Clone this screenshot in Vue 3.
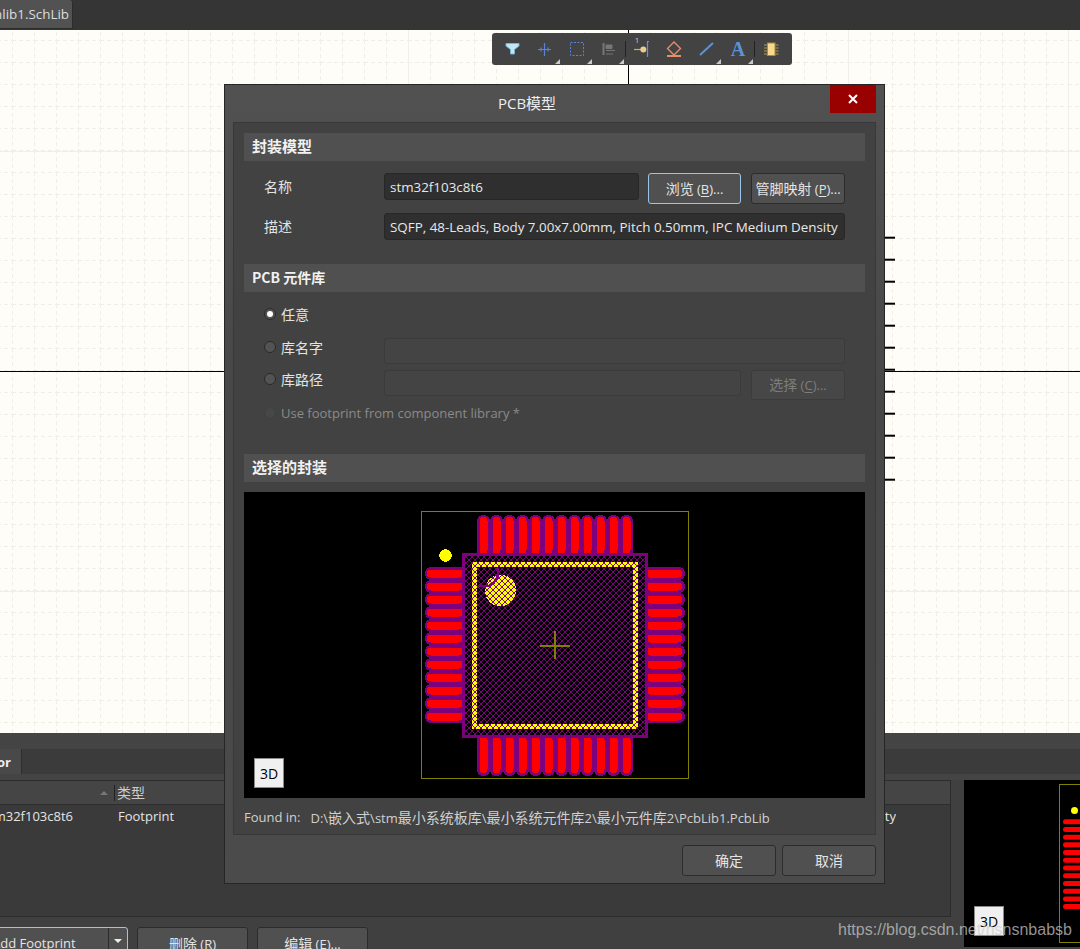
<script setup>
const idx = Array.from({ length: 12 }, (_, i) => i)
const topX = idx.map(i => 483.5 + 13 * i)
const sideY = idx.map(i => 573.5 + 13 * i)
const pinY = idx.map(i => 237.7 + 22 * i)
const miniY = idx.map(i => 821.7 + 7.72 * i)
const triangles = [560, 592, 624, 721, 753]
const compRows = [45, 48, 51, 54]
let h = ''
for (let i = 0; i < 6; i++) {
  h += `M${i} ${i}h1v1h-1zM${5 - i} ${i}h1v1h-1z`
}
const hatchTile = h
</script>

<template>
  <div class="app">
    <header class="topbar">
      <div class="doc-tab"><span>Schlib1.SchLib</span></div>
    </header>

    <section class="canvas">
      <svg class="sheet" viewBox="0 30 1080 703" width="1080" height="703">
        <defs>
          <pattern id="minor" x="12" y="18" width="22" height="22" patternUnits="userSpaceOnUse">
            <path d="M0.5 0V22M0 0.5H22" fill="none" stroke="#f0eee8" stroke-width="1" stroke-dasharray="4 3" />
          </pattern>
        </defs>
        <rect x="0" y="30" width="1080" height="703" fill="#fffdf8" />
        <rect x="0" y="30" width="1080" height="703" fill="url(#minor)" />
        <path d="M188.5 30V733M408.5 30V733M848.5 30V733M1068.5 30V733M0 151.5H1080M0 591.5H1080" stroke="#f1efe9" fill="none" />
        <path d="M628.5 30V733M0 371.5H1080" stroke="#000" stroke-width="1" fill="none" />
        <path v-for="y in pinY" :key="y" :d="`M885 ${y}H895`" stroke="#000" stroke-width="2" />
      </svg>

      <div class="toolbar">
        <svg viewBox="492 33 300 32" width="300" height="32">
          <path d="M506 43.5H519V46L514.5 49.5V54H510.5V49.5L506 46Z" fill="#c4e6f4" stroke="#74b4cf" stroke-width="1" />
          <path d="M538 49.5H551M544.5 43V56M541 47.5V51.5M548 47.5V51.5" stroke="#5b82d6" stroke-width="1.2" fill="none" />
          <rect x="570.5" y="42.5" width="13" height="13" fill="none" stroke="#5b82d6" stroke-dasharray="2 1.5" />
          <path d="M603.5 43V55" stroke="#777" stroke-width="2" />
          <path d="M606 45H612V48.5H606ZM606 50.5H615" fill="#777" stroke="#777" />
          <path d="M606 54H613" stroke="#777" />
          <path d="M625.5 41V57M754.5 41V57" stroke="#222" />
          <text x="637" y="43" class="pin-num">1</text>
          <path d="M634 49.5H641" stroke="#c7a96a" stroke-width="1.2" />
          <circle cx="643.3" cy="49.5" r="3" fill="#eccd8e" />
          <path d="M649 41.5H647.5V57" stroke="#5f92db" stroke-width="1.2" fill="none" />
          <path d="M674 42L680.5 48.5L674 55L667.5 48.5Z" fill="none" stroke="#e48e6a" stroke-width="1.4" />
          <rect x="667" y="55" width="14" height="2" fill="#e48e6a" />
          <path d="M700 55L713 43" stroke="#5a93d8" stroke-width="2" />
          <text x="738" y="56" class="tool-a">A</text>
          <rect x="767.5" y="43" width="7.5" height="12.5" fill="#f7d990" stroke="#a88c3a" />
          <path v-for="y in compRows" :key="y" :d="`M764 ${y}H767M775.5 ${y}H778.5`" stroke="#b39a4d" />
          <path v-for="x in triangles" :key="x" :d="`M${x - 5} 64H${x}V59Z`" fill="#c9c9c9" />
        </svg>
      </div>
    </section>

    <section class="bottom">
      <div class="band"></div>
      <div class="tabs"><div class="tab"><span>Editor</span></div></div>
      <div class="tab-rule"></div>
      <div class="bottom-main">
        <div class="left-col">
          <div class="table">
            <div class="thead">
              <div class="th-name"><i class="sort"></i></div>
              <div class="th-type">类型</div>
            </div>
            <div class="trow">
              <div class="td-name"><span>stm32f103c8t6</span></div>
              <div class="td-type">Footprint</div>
              <div class="td-desc"><span>SQFP, 48-Leads, Body 7.00x7.00mm, Pitch 0.50mm, IPC Medium Density</span></div>
            </div>
          </div>
          <div class="actions">
            <button class="btn add-btn">
              <span class="add-text">Add Footprint</span>
              <span class="add-caret"><i></i></span>
            </button>
            <button class="btn act-btn"><span><span class="zh">删除</span> (R)</span></button>
            <button class="btn act-btn"><span><span class="zh">编辑</span> (E)...</span></button>
          </div>
        </div>
        <div class="mini-preview">
          <svg viewBox="964 780 116 167" width="116" height="167">
            <rect x="1059.5" y="784.5" width="40" height="158" fill="none" stroke="#808000" />
            <circle cx="1074.5" cy="810.5" r="3.5" fill="#ff0" />
            <rect v-for="y in miniY" :key="y" x="1063" :y="y - 2.5" width="30" height="5" rx="2.5" fill="#f00" />
          </svg>
          <div class="btn-3d mini-3d">3D</div>
        </div>
      </div>
    </section>

    <div class="dialog">
      <div class="title">
        <span>PCB<span class="zh">模型</span></span>
        <button class="close">
          <svg viewBox="0 0 10 10" width="10" height="10"><path d="M1 1L9 9M9 1L1 9" stroke="#fff" stroke-width="2" /></svg>
        </button>
      </div>
      <div class="panel">
        <h3 class="sec">封装模型</h3>
        <div class="row row-first">
          <label class="lbl">名称</label>
          <div class="input w-name">stm32f103c8t6</div>
          <button class="btn browse focus"><span><span class="zh">浏览</span> (<u>B</u>)...</span></button>
          <button class="btn map"><span><span class="zh">管脚映射</span> (<u>P</u>)...</span></button>
        </div>
        <div class="row row-second">
          <label class="lbl">描述</label>
          <div class="input grow">SQFP, 48-Leads, Body 7.00x7.00mm, Pitch 0.50mm, IPC Medium Density</div>
        </div>

        <h3 class="sec sec-lib">PCB 元件库</h3>
        <div class="radio-row r-any">
          <span class="radio on"></span><span class="zh">任意</span>
        </div>
        <div class="row row-lib">
          <div class="radio-cell"><span class="radio"></span><span class="zh">库名字</span></div>
          <div class="input off grow"></div>
        </div>
        <div class="row row-path">
          <div class="radio-cell"><span class="radio"></span><span class="zh">库路径</span></div>
          <div class="input off grow"></div>
          <button class="btn select-btn"><span><span class="zh">选择</span> (<u>C</u>)...</span></button>
        </div>
        <div class="radio-row r-use">
          <span class="radio faint"></span><span>Use footprint from component library *</span>
        </div>

        <h3 class="sec sec-sel">选择的封装</h3>
        <div class="preview">
          <svg viewBox="244 492 621 306" width="621" height="306" shape-rendering="crispEdges">
            <defs>
              <pattern id="hatch" x="466" y="557" width="6" height="6" patternUnits="userSpaceOnUse">
                <path :d="hatchTile" fill="#7d007d" />
              </pattern>
            </defs>
            <rect x="421.5" y="511.5" width="267" height="267" fill="none" stroke="#808000" />

            <rect v-for="x in topX" :key="'pt' + x" :x="x - 6.5" y="515" width="13" height="42" rx="6" fill="#7d007d" />
            <rect v-for="x in topX" :key="'pb' + x" :x="x - 6.5" y="734" width="13" height="42" rx="6" fill="#7d007d" />
            <rect v-for="y in sideY" :key="'pl' + y" x="425" :y="y - 6.5" width="42" height="13" rx="6" fill="#7d007d" />
            <rect v-for="y in sideY" :key="'pr' + y" x="643" :y="y - 6.5" width="42" height="13" rx="6" fill="#7d007d" />

            <rect v-for="x in topX" :key="'rt' + x" :x="x - 4" y="517" width="8" height="37" rx="4" fill="#f00" />
            <rect v-for="x in topX" :key="'rb' + x" :x="x - 4" y="736" width="8" height="37" rx="4" fill="#f00" />
            <rect v-for="y in sideY" :key="'rl' + y" x="427" :y="y - 4" width="36" height="8" rx="4" fill="#f00" />
            <rect v-for="y in sideY" :key="'rr' + y" x="646" :y="y - 4" width="36" height="8" rx="4" fill="#f00" />

            <circle cx="445.5" cy="555.5" r="6.3" fill="#ff0" />
            <rect x="463.5" y="554.5" width="183" height="182" fill="#000" stroke="#7d007d" stroke-width="3" />
            <rect x="474.5" y="564.5" width="161" height="162" fill="none" stroke="#ff0" stroke-width="5" />
            <circle cx="500.5" cy="590.5" r="15.7" fill="#ff0" />
            <rect x="465" y="556" width="180" height="179" fill="url(#hatch)" />
            <path d="M497.3 568.3A13.7 13.7 0 0 1 478.3 585" fill="none" stroke="#7d007d" stroke-width="2.5" />
            <path d="M540 645.5H570M554.5 631V659" stroke="#808000" stroke-width="2" />
          </svg>
          <div class="btn-3d main-3d">3D</div>
        </div>
        <div class="found">
          <span class="found-lbl">Found in:</span>
          <span>D:\<span class="zh">嵌入式</span>\stm<span class="zh">最小系统板库</span>\<span class="zh">最小系统元件库</span>2\<span class="zh">最小元件库</span>2\PcbLib1.PcbLib</span>
        </div>
      </div>
      <div class="foot">
        <button class="btn foot-btn"><span class="zh">确定</span></button>
        <button class="btn foot-btn"><span class="zh">取消</span></button>
      </div>
    </div>

    <div class="watermark">https://blog.csdn.net/nsnsnbabsb</div>
  </div>
</template>

<style>
html, body { margin: 0; background: #3f3f3f; }
</style>

<style scoped>
.app {
  position: relative;
  width: 1080px;
  height: 949px;
  overflow: hidden;
  display: flex;
  flex-direction: column;
  font-family: "Open Sans", "Noto Sans CJK SC", sans-serif;
  font-size: 13px;
  color: #e4e4e4;
  background: #3f3f3f;
}
.zh { font-family: "Noto Sans CJK SC", sans-serif; font-size: 14px; }
.topbar { height: 30px; flex: none; background: #353535; }
.doc-tab {
  width: 73px;
  height: 29px;
  box-sizing: border-box;
  background: #525252;
  border-right: 1px solid #2c2c2c;
  border-bottom: 1px solid #2c2c2c;
  border-radius: 0 3px 0 0;
  display: flex;
  justify-content: flex-end;
  align-items: center;
  padding-right: 3px;
  overflow: hidden;
  white-space: nowrap;
  color: #ddd;
  font-size: 13.4px;
}
.canvas { position: relative; height: 703px; flex: none; }
.sheet { display: block; }
.toolbar {
  position: absolute;
  left: 492px;
  top: 3px;
  width: 300px;
  height: 32px;
  background: #434343;
  border-radius: 3px;
}
.toolbar svg { display: block; }
.pin-num { font: 8px "Open Sans", sans-serif; fill: #c9c9c9; text-anchor: middle; }
.tool-a { font: bold 20px "Liberation Serif", serif; fill: #5a93d8; text-anchor: middle; }

.bottom { flex: 1; display: flex; flex-direction: column; min-height: 0; background: #404040; }
.band { height: 16px; background: #444; flex: none; }
.tabs { height: 25px; flex: none; background: #3b3b3b; }
.tab {
  width: 22px;
  height: 25px;
  box-sizing: border-box;
  background: #494949;
  border-right: 1px solid #2e2e2e;
  display: flex;
  justify-content: flex-end;
  align-items: center;
  padding-right: 10px;
  overflow: hidden;
  font-weight: 700;
  color: #eee;
}
.tab-rule { height: 6px; flex: none; background: #444; }
.bottom-main { display: flex; gap: 13px; flex: 1; min-height: 0; }
.left-col { width: 951px; flex: none; }
.table {
  height: 137px;
  box-sizing: border-box;
  background: #3a3a3a;
  border: 1px solid #2c2c2c;
  border-left: 0;
}
.thead {
  height: 23px;
  display: flex;
  align-items: center;
  background: #454545;
  border-bottom: 1px solid #2e2e2e;
}
.th-name {
  width: 115px;
  height: 16px;
  flex: none;
  box-sizing: border-box;
  border-right: 1px solid #222;
  position: relative;
}
.sort {
  position: absolute;
  right: 6px;
  top: 6px;
  width: 0;
  height: 0;
  border: 4px solid transparent;
  border-top: 0;
  border-bottom: 4px solid #777;
}
.th-type {
  padding-left: 2px;
  padding-bottom: 2px;
  font-family: "Noto Sans CJK SC", sans-serif;
  font-size: 14px;
  color: #ccc;
}
.trow { display: flex; align-items: center; height: 22px; position: relative; }
.td-name {
  width: 73px;
  flex: none;
  display: flex;
  justify-content: flex-end;
  white-space: nowrap;
  overflow: hidden;
  margin-right: 45px;
}
.td-type { width: 200px; flex: none; }
.td-desc {
  width: 578px;
  flex: none;
  display: flex;
  justify-content: flex-end;
  white-space: nowrap;
  overflow: hidden;
}
.actions { display: flex; gap: 9px; margin-top: 10px; align-items: flex-start; }
.btn {
  box-sizing: border-box;
  margin: 0;
  padding: 0 0 2px;
  background: #505050;
  border: 1px solid #2c2c2c;
  border-radius: 3px;
  color: #e4e4e4;
  font: inherit;
  display: flex;
  align-items: center;
  justify-content: center;
  white-space: pre;
}
.btn u { text-underline-offset: 2px; }
.add-btn {
  width: 148px;
  height: 32px;
  margin-left: -20px;
  border-color: #9cc4ea;
  justify-content: flex-start;
  flex: none;
  padding: 0;
}
.add-text { width: 127px; padding-left: 11px; box-sizing: border-box; flex: none; white-space: nowrap; text-align: left; }
.add-caret {
  width: 20px;
  align-self: stretch;
  border-left: 1px solid #2c2c2c;
  display: flex;
  justify-content: center;
  padding-top: 11px;
  box-sizing: border-box;
}
.add-caret i {
  width: 0;
  height: 0;
  border: 4px solid transparent;
  border-bottom: 0;
  border-top: 4px solid #eee;
}
.act-btn { width: 111px; height: 32px; flex: none; padding: 0; }
.mini-preview { position: relative; width: 116px; height: 167px; background: #000; flex: none; overflow: hidden; }
.mini-preview svg { display: block; }
.btn-3d {
  position: absolute;
  width: 30px;
  height: 30px;
  box-sizing: border-box;
  background: #f0f0f0;
  border: 1px solid #8a8a8a;
  color: #000;
  display: flex;
  align-items: center;
  justify-content: center;
  font-family: "Open Sans", sans-serif;
  font-size: 14px;
}
.mini-3d { left: 10px; top: 126px; }
.main-3d { left: 10px; top: 266px; }

.dialog {
  position: absolute;
  left: 224px;
  top: 84px;
  width: 661px;
  height: 800px;
  box-sizing: border-box;
  background: linear-gradient(#515151, #474747 40%, #4b4b4b);
  border: 1px solid #262626;
  display: flex;
  flex-direction: column;
}
.title {
  height: 37px;
  flex: none;
  position: relative;
  display: flex;
  align-items: center;
  justify-content: center;
  font-size: 15px;
  color: #eee;
  padding-bottom: 3px;
  box-sizing: border-box;
  padding-right: 55px;
}
.title .zh { font-size: 15px; }
.close {
  position: absolute;
  right: 8px;
  top: 0;
  width: 46px;
  height: 28px;
  border: 0;
  padding: 0;
  background: #990000;
  display: flex;
  align-items: center;
  justify-content: center;
}
.panel {
  margin: 0 8px;
  height: 713px;
  flex: none;
  box-sizing: border-box;
  background: #424242;
  border: 1px solid #383838;
  padding: 10px 10px 0;
}
.sec {
  margin: 0;
  height: 28px;
  box-sizing: border-box;
  background: #505050;
  padding: 0 0 4px 8px;
  display: flex;
  align-items: center;
  font-family: "Noto Sans CJK SC", sans-serif;
  font-size: 15px;
  font-weight: 700;
  color: #f2f2f2;
}
.sec-lib { margin-top: 24px; font-size: 14px; padding-bottom: 2px; }
.sec-sel { margin-top: 30px; }
.row { display: flex; align-items: flex-start; padding-right: 20px; }
.row-first { margin-top: 12px; height: 31px; }
.row-second { margin-top: 9px; height: 27px; }
.row-lib { margin-top: 13px; height: 26px; }
.row-path { margin-top: 6px; height: 30px; }
.lbl {
  width: 140px;
  flex: none;
  box-sizing: border-box;
  padding: 0 0 2px 20px;
  height: 27px;
  display: flex;
  align-items: center;
  font-family: "Noto Sans CJK SC", sans-serif;
  font-size: 14px;
}
.input {
  box-sizing: border-box;
  height: 27px;
  background: #2f2f2f;
  border: 1px solid #272727;
  border-radius: 3px;
  padding-left: 5px;
  display: flex;
  align-items: center;
  white-space: nowrap;
  overflow: hidden;
  color: #e8e8e8;
  font-size: 13.4px;
}
.input.off { height: 26px; background: #444; border-color: #3b3b3b; }
.grow { flex: 1; }
.w-name { width: 255px; flex: none; }
.browse { width: 93px; height: 31px; margin-left: 9px; flex: none; }
.map { width: 94px; height: 31px; margin-left: 10px; flex: none; }
.focus { border-color: #9cc4ea; }
.select-btn {
  width: 94px;
  height: 30px;
  margin-left: 10px;
  flex: none;
  background: #474747;
  border-color: #3b3b3b;
  color: #7d7d7d;
}
.radio-row { display: flex; align-items: center; padding-left: 20px; height: 22px; }
.r-any { margin-top: 11px; }
.r-use { margin-top: 2px; color: #8a8a8a; }
.radio-cell { width: 140px; flex: none; box-sizing: border-box; padding-left: 20px; height: 20px; display: flex; align-items: center; margin-top: -1px; }
.radio {
  width: 12px;
  height: 12px;
  box-sizing: border-box;
  flex: none;
  border-radius: 50%;
  background: #535353;
  border: 1px solid #2a2a2a;
  margin-right: 5px;
  position: relative;
}
.radio.on::after {
  content: "";
  position: absolute;
  left: 2px;
  top: 2px;
  width: 6px;
  height: 6px;
  border-radius: 50%;
  background: #fff;
}
.radio.faint { background: #474747; border-color: #404040; }
.preview { position: relative; margin-top: 10px; height: 306px; background: #000; }
.preview svg { display: block; }
.found { margin-top: 10px; height: 20px; display: flex; align-items: center; gap: 10px; color: #d0d0d0; white-space: nowrap; padding-bottom: 2px; box-sizing: border-box; }
.foot { display: flex; justify-content: flex-end; gap: 6px; margin-top: 10px; padding-right: 8px; }
.foot-btn { width: 94px; height: 31px; flex: none; }
.watermark {
  position: absolute;
  left: 838px;
  top: 920px;
  font-family: "Liberation Sans", sans-serif;
  font-size: 16px;
  line-height: 20px;
  color: rgba(205, 205, 205, 0.72);
  white-space: nowrap;
}
</style>
